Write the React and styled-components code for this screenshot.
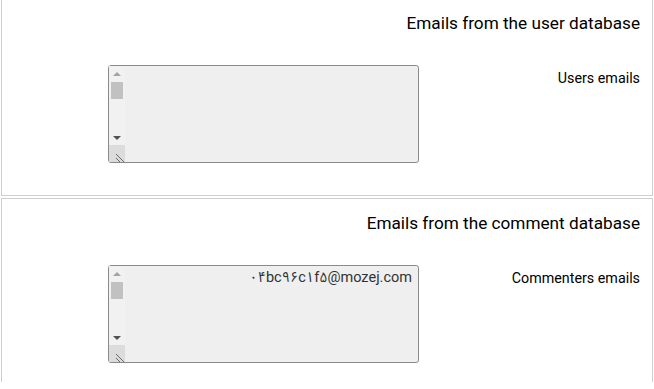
import React from "react";
import styled, { createGlobalStyle } from "styled-components";

const Global = createGlobalStyle`
  html, body {
    margin: 0;
    padding: 0;
    background: #fff;
  }
  body {
    font-family: Roboto, "Liberation Sans", sans-serif;
    color: #111;
  }
`;

const Page = styled.div`
  direction: rtl;
  margin-top: -2px;
  display: flex;
  flex-direction: column;
  gap: 2px;
`;

const Card = styled.section`
  margin: 0 1px;
  border: 1px solid #cfcfcf;
  border-bottom: ${(p) => (p.$open ? "none" : "1px solid #cfcfcf")};
  padding: 12px 12px ${(p) => (p.$open ? "19px" : "32px")};
`;

const Title = styled.h3`
  margin: 0;
  font-size: 17.2px;
  font-weight: 400;
  line-height: 24px;
  color: #000;
  text-align: right;
`;

const Row = styled.div`
  display: flex;
  align-items: flex-start;
  margin-top: 30px;
`;

const Label = styled.label`
  width: 203px;
  padding-top: 5px;
  font-size: 14.3px;
  font-weight: 400;
  line-height: 16px;
  color: #000;
`;

const Field = styled.div`
  position: relative;
  width: 311px;
  height: 98px;
  margin-right: 18px;
`;

const Box = styled.textarea`
  direction: rtl;
  display: block;
  box-sizing: border-box;
  width: 100%;
  height: 100%;
  margin: 0;
  padding: 3px 6px 3px 20px;
  border: 1px solid #8a8a8a;
  border-radius: 3px;
  background: #efefef;
  color: #333;
  font-family: Roboto, "Noto Sans Arabic", "DejaVu Sans", sans-serif;
  font-size: 14.5px;
  line-height: 18px;
  overflow: hidden;
  resize: none;
  outline: none;
`;

const Scrollbar = styled.div`
  position: absolute;
  left: 1px;
  top: 1px;
  bottom: 1px;
  width: 16px;
  display: flex;
  flex-direction: column;
  background: #f1f1f1;
  border-bottom-left-radius: 2px;
  overflow: hidden;
`;

const Arrow = styled.div`
  height: 15px;
  flex: none;
  display: flex;
  align-items: center;
  justify-content: center;

  &::before {
    content: "";
    width: 0;
    height: 0;
    border-left: 4px solid transparent;
    border-right: 4px solid transparent;
    ${(p) =>
      p.$down
        ? "border-top: 4px solid #505050;"
        : "border-bottom: 4px solid #a3a3a3;"}
  }
`;

const Track = styled.div`
  flex: 1;
  padding: 1px 2px;
`;

const Thumb = styled.div`
  height: 17px;
  background: #c1c1c1;
`;

const Corner = styled.div`
  height: 17px;
  flex: none;
  background: #dcdcdc;
  display: flex;
  align-items: flex-end;
  justify-content: flex-start;
`;

const Grip = () => (
  <svg width="9" height="9" viewBox="0 0 9 9">
    <path d="M0 1 L8 9 M0 5 L4 9" stroke="#6a6a6a" strokeWidth="1" />
  </svg>
);

const sections = [
  { title: "Emails from the user database", label: "Users emails", value: "" },
  {
    title: "Emails from the comment database",
    label: "Commenters emails",
    value: "۰۴bc۹۶c۱f۵@mozej.com",
  },
];

export default function App() {
  return (
    <>
      <Global />
      <Page>
        {sections.map((s, i) => (
          <Card key={s.title} $open={i === sections.length - 1}>
            <Title>{s.title}</Title>
            <Row>
              <Label>{s.label}</Label>
              <Field>
                <Box readOnly value={s.value} />
                <Scrollbar>
                  <Arrow />
                  <Track>
                    <Thumb />
                  </Track>
                  <Arrow $down />
                  <Corner>
                    <Grip />
                  </Corner>
                </Scrollbar>
              </Field>
            </Row>
          </Card>
        ))}
      </Page>
    </>
  );
}
